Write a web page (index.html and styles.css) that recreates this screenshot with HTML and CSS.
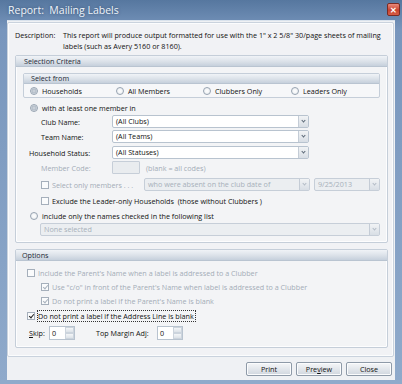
FILE: index.html
```html
<!DOCTYPE html>
<html lang="en">
<head>
    <meta charset="UTF-8">
    <title>Report: Mailing Labels</title>
    <link rel="stylesheet" href="styles.css">
</head>
<body>
    <div class="window">
        <div class="titlebar">
            <span class="title">Report:&nbsp; Mailing Labels</span>
            <span class="close">&#x2715;</span>
        </div>
        <div class="client">
            <div class="panel">
                <div class="desc">
                    <span class="desc-label">Description:</span>
                    <span class="desc-text">This report will produce output formatted for use with the 1" x 2 5/8" 30/page sheets of mailing labels (such as Avery 5160 or 8160).</span>
                </div>

                <div class="group criteria">
                    <div class="group-head">Selection Criteria</div>
                    <div class="subgroup">
                        <div class="group-head">Select from</div>
                        <div class="radio-row">
                            <span class="opt opt-house"><span class="radio on"></span>Households</span>
                            <span class="opt opt-all"><span class="radio"></span>All Members</span>
                            <span class="opt opt-club"><span class="radio"></span>Clubbers Only</span>
                            <span class="opt"><span class="radio"></span>Leaders Only</span>
                        </div>
                    </div>
                    <div class="row r-with"><span class="radio on"></span>with at least one member in</div>
                    <div class="row r-club">
                        <span class="field-label">Club Name:</span>
                        <span class="combo">(All Clubs)<span class="drop"></span></span>
                    </div>
                    <div class="row r-team">
                        <span class="field-label">Team Name:</span>
                        <span class="combo">(All Teams)<span class="drop"></span></span>
                    </div>
                    <div class="row r-status">
                        <span class="field-label wide">Household Status:</span>
                        <span class="combo">(All Statuses)<span class="drop"></span></span>
                    </div>
                    <div class="row r-code disabled">
                        <span class="field-label">Member Code:</span>
                        <span class="codebox"></span>
                        <span class="hint">(blank = all codes)</span>
                    </div>
                    <div class="row r-select disabled">
                        <span class="check"></span>
                        <span class="select-text">Select only members . . .</span>
                        <span class="combo off absent">who were absent on the club date of<span class="drop"></span></span>
                        <span class="combo off date">9/25/2013<span class="drop"></span></span>
                    </div>
                    <div class="row r-exclude"><span class="check"></span>Exclude the Leader-only Households&nbsp; (those without Clubbers )</div>
                    <div class="row r-include"><span class="radio"></span>include only the names checked in the following list</div>
                    <div class="row r-none">
                        <span class="combo off list">None selected<span class="drop"></span></span>
                    </div>
                </div>

                <div class="group options">
                    <div class="group-head">Options</div>
                    <div class="row o-parent disabled"><span class="check"></span>Include the Parent's Name when a label is addressed to a Clubber</div>
                    <div class="row o-co disabled"><span class="check on"></span>Use "c/o" in front of the Parent's Name when label is addressed to a Clubber</div>
                    <div class="row o-blank disabled"><span class="check on"></span>Do not print a label if the Parent's Name is blank</div>
                    <div class="row o-address"><span class="check on dark"></span><span class="focus">Do not print a label if the Address Line is blank</span></div>
                    <div class="row o-spin">
                        <span class="spin-label"><u>S</u>kip:</span>
                        <span class="spin"><span class="spin-val">0</span><span class="spin-btns"><span></span><span></span></span></span>
                        <span class="spin-label margin">Top Margin Adj:</span>
                        <span class="spin"><span class="spin-val">0</span><span class="spin-btns"><span></span><span></span></span></span>
                    </div>
                </div>
            </div>
            <div class="buttons">
                <span class="btn">Print</span>
                <span class="btn">Pre<u>v</u>iew</span>
                <span class="btn">Close</span>
            </div>
        </div>
    </div>
</body>
</html>
```
FILE: styles.css
```css
* {
    margin: 0;
    padding: 0;
    box-sizing: border-box;
}
body {
    width: 402px;
    height: 384px;
    overflow: hidden;
    font-family: 'Open Sans', 'Noto Sans', sans-serif;
    font-size: 7.2px;
    color: #111111;
}
.window {
    width: 402px;
    height: 384px;
    display: flex;
    flex-direction: column;
    background: linear-gradient(#56779f, #7896bd 30px, #8faacb);
    padding: 0 7px 4px 7px;
}
.titlebar {
    height: 20px;
    display: flex;
    align-items: center;
    justify-content: space-between;
    margin: 0 -7px;
    padding: 0 2px 0 8px;
}
.title {
    color: #eef3f9;
    font-size: 10.5px;
    text-shadow: 0 0 3px rgba(30, 50, 80, 0.6);
}
.close {
    width: 13px;
    height: 13px;
    margin-bottom: 2px;
    background: linear-gradient(#e98a7c, #c9422f 55%, #d65c45);
    border: 1px solid #7a2b24;
    border-radius: 2px;
    color: white;
    font-size: 8px;
    font-weight: bold;
    display: flex;
    align-items: center;
    justify-content: center;
}
.client {
    flex: 1;
    background: #eff1f4;
    border-top: 1px solid #d9e2ec;
    padding: 1px 1px 0 0;
    display: flex;
    flex-direction: column;
}
.panel {
    height: 335px;
    border: 1px solid #c9d2dd;
    border-radius: 2px;
    box-shadow: inset 0 0 0 1px #fbfcfd;
    background: #f1f2f5;
    padding: 7px 5px 0 7px;
}
.desc {
    display: flex;
    line-height: 11px;
}
.desc-label {
    width: 48px;
    flex-shrink: 0;
}
.desc-text {
    width: 322px;
}

/* group boxes */
.group {
    border: 1px solid #c5ced9;
    border-radius: 2px;
    background: #f3f4f6;
    box-shadow: inset 0 0 0 1px #fdfdfe;
}
.criteria {
    margin-top: 3px;
    height: 188px;
}
.options {
    margin-top: 6px;
    height: 99px;
}
.group-head {
    height: 11px;
    line-height: 10px;
    padding-left: 8px;
    background: linear-gradient(#f0f3f7, #dde3ea 50%, #c6d0dc);
    border-bottom: 1px solid #b9c4d1;
    color: #1f2a36;
}
.options .group-head {
    padding-left: 6px;
}
.subgroup {
    margin: 6px 7px 0 7px;
    height: 25px;
    border: 1px solid #c5ced9;
    border-radius: 2px;
    background: #f6f7f9;
}
.subgroup .group-head {
    height: 10px;
    line-height: 9px;
    padding-left: 7px;
}
.radio-row {
    height: 14px;
    display: flex;
    align-items: center;
    padding-left: 6px;
}
.opt {
    display: flex;
    align-items: center;
}
.opt-house { width: 86px; }
.opt-all { width: 87px; }
.opt-club { width: 88px; }

/* rows */
.row {
    height: 13px;
    display: flex;
    align-items: center;
    white-space: nowrap;
}
.criteria .row {
    padding-left: 14px;
}
.r-with { margin-top: 3px; }
.r-club { margin-top: 1px; }
.r-team { margin-top: 2px; }
.r-status { margin-top: 3px; }
.r-code { margin-top: 2px; }
.r-select { margin-top: 4px; }
.r-exclude { margin-top: 3px; }
.r-include { margin-top: 2px; }
.r-none { margin-top: 1px; }
.criteria .r-club, .criteria .r-team, .criteria .r-code, .criteria .r-select, .criteria .r-exclude {
    padding-left: 25px;
}
.criteria .r-status {
    padding-left: 13px;
}
.criteria .r-none {
    padding-left: 24px;
}
.field-label {
    width: 71px;
    flex-shrink: 0;
}
.field-label.wide {
    width: 83px;
}
.disabled {
    color: #a3acb7;
}

.radio {
    width: 8px;
    height: 8px;
    border-radius: 50%;
    border: 1px solid #97a3b1;
    background: radial-gradient(#ffffff, #e6eaee);
    margin-right: 4px;
    flex-shrink: 0;
}
.radio.on {
    background: radial-gradient(#c9d0d8 30%, #aab5c2 45%, #dfe4e9 70%);
}
.check {
    width: 8px;
    height: 8px;
    border: 1px solid #a5afbb;
    background: #fafbfc;
    margin-right: 3px;
    flex-shrink: 0;
    position: relative;
}
.check.on::after {
    content: "";
    position: absolute;
    left: 2px;
    top: 0;
    width: 2px;
    height: 4px;
    border: solid #a9b3be;
    border-width: 0 1px 1px 0;
    transform: rotate(40deg);
}
.check.dark::after {
    border-color: #222;
}
.focus {
    outline: 1px dotted #333;
    outline-offset: 0;
    padding: 0 1px 0 0;
}

.combo {
    position: relative;
    width: 197px;
    height: 13px;
    line-height: 11px;
    border: 1px solid #b8c3cf;
    border-radius: 2px;
    background: #ffffff;
    padding-left: 3px;
    color: #111111;
}
.combo.off {
    background: #ebeef1;
    color: #a7b0ba;
    border-color: #c6ced8;
}
.drop {
    position: absolute;
    right: 0;
    top: 0;
    width: 10px;
    height: 11px;
    border-left: 1px solid #c4ccd6;
    background: linear-gradient(#f1f3f5, #d8dee5);
}
.drop::after {
    content: "";
    position: absolute;
    left: 3px;
    top: 3px;
    width: 2px;
    height: 2px;
    border: solid #5a6776;
    border-width: 0 1px 1px 0;
    transform: rotate(45deg);
}
.combo.off .drop::after {
    border-color: #b3bcc6;
}
.codebox {
    width: 28px;
    height: 13px;
    border: 1px solid #c6ced8;
    background: #e9ecef;
    border-radius: 1px;
}
.hint {
    margin-left: 6px;
}
.select-text {
    width: 92px;
}
.combo.absent {
    width: 166px;
}
.combo.date {
    width: 66px;
    margin-left: 4px;
}
.combo.list {
    width: 340px;
}

.options .row {
    padding-left: 11px;
}
.o-parent { margin-top: 5px; }
.o-co { margin-top: 1px; }
.o-blank { margin-top: 1px; }
.o-address { margin-top: 2px; }
.options .o-co, .options .o-blank {
    padding-left: 25px;
}
.o-spin {
    margin-top: 4px;
    height: 14px;
}
.options .o-spin {
    padding-left: 13px;
}
.spin-label {
    width: 20px;
}
.spin-label.margin {
    width: 61px;
    margin-left: 21px;
}
.spin {
    width: 26px;
    height: 14px;
    border: 1px solid #b8c3cf;
    background: white;
    display: flex;
}
.spin-val {
    flex: 1;
    line-height: 12px;
    padding-left: 2px;
}
.spin-btns {
    width: 9px;
    display: flex;
    flex-direction: column;
}
.spin-btns span {
    flex: 1;
    border: 1px solid #ccd4dd;
    background: linear-gradient(#f4f6f8, #dce2e8);
}

.buttons {
    display: flex;
    justify-content: flex-end;
    gap: 4px;
    padding: 5px 2px 0 0;
}
.btn {
    width: 46px;
    height: 14px;
    line-height: 12px;
    text-align: center;
    border: 1px solid #8e9aa8;
    border-radius: 2px;
    background: linear-gradient(#f5f6f8, #e3e7ec 50%, #cfd6de);
    box-shadow: inset 0 0 0 1px #fbfcfd;
}
```
